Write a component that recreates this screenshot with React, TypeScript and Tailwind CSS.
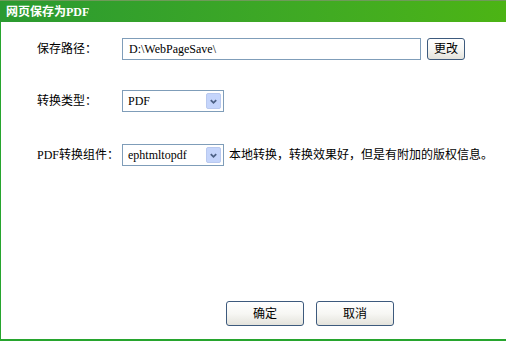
const FONT = "[font-family:'Liberation_Serif','Noto_Sans_CJK_SC',serif]";

function Chevron() {
  return (
    <svg viewBox="0 0 10 10" className="h-[9px] w-[9px]">
      <path d="M2 3.5 L5 6.5 L8 3.5" fill="none" stroke="#4d6185" strokeWidth="2" />
    </svg>
  );
}

function Select({ value }: { value: string }) {
  return (
    <div className="flex h-[22px] w-[102px] items-center justify-between border border-[#7f9db9] bg-white pl-[5px] pr-[2px]">
      <span className="text-[12px] text-black">{value}</span>
      <span className="flex h-[16px] w-[15px] items-center justify-center rounded-[2px] border border-[#b9c9ef] bg-[#c5d5fb]">
        <Chevron />
      </span>
    </div>
  );
}

function Btn({ label, w, h }: { label: string; w: string; h: string }) {
  return (
    <button
      className={`${w} ${h} flex items-center justify-center rounded-[3px] border border-[#3d5a7d] bg-gradient-to-b from-white via-[#f7f7f4] to-[#e4e3dc] text-[12px] text-black`}
    >
      {label}
    </button>
  );
}

export default function App() {
  return (
    <div className={`flex h-[341px] w-[506px] flex-col bg-white ${FONT}`}>
      {/* Title bar */}
      <div className="flex h-[22px] items-center border-t border-[#6f9a5a] bg-gradient-to-r from-[#2a9a30] to-[#4cb414] pl-[6px]">
        <span className="text-[12px] font-bold text-white">网页保存为PDF</span>
      </div>

      <div className="flex flex-1 flex-col border-b-2 border-l border-[#27a52e] pl-[36px] text-[12px] text-black">
        {/* 保存路径 */}
        <div className="mt-[16px] flex items-center">
          <span className="w-[85px]">保存路径：</span>
          <div className="flex h-[22px] w-[299px] items-center border border-[#7f9db9] pl-[6px]">
            D:\WebPageSave\
          </div>
          <div className="ml-[6px]">
            <Btn label="更改" w="w-[38px]" h="h-[22px]" />
          </div>
        </div>

        {/* 转换类型 */}
        <div className="mt-[30px] flex items-center">
          <span className="w-[85px]">转换类型：</span>
          <Select value="PDF" />
        </div>

        {/* PDF转换组件 */}
        <div className="mt-[32px] flex items-center">
          <span className="w-[85px]">PDF转换组件：</span>
          <Select value="ephtmltopdf" />
          <span className="ml-[5px]">本地转换，转换效果好，但是有附加的版权信息。</span>
        </div>

        <div className="flex-1" />

        <div className="mb-[13px] ml-[189px] flex gap-[12px]">
          <Btn label="确定" w="w-[78px]" h="h-[25px]" />
          <Btn label="取消" w="w-[78px]" h="h-[25px]" />
        </div>
      </div>
    </div>
  );
}
